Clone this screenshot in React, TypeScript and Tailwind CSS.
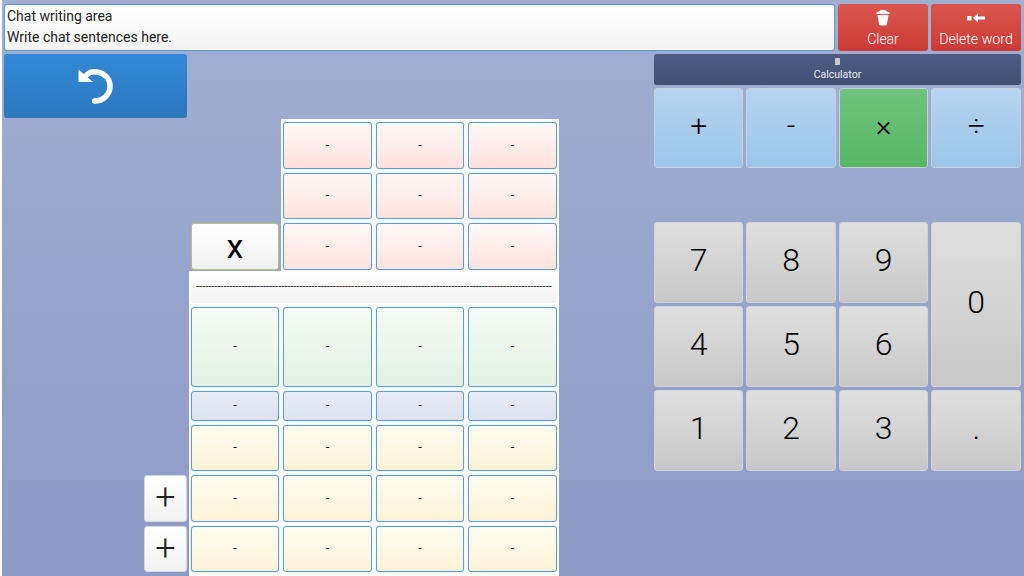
import type { ReactNode } from "react";

const font = { fontFamily: "Roboto, sans-serif" };

function Cell({ tone, className = "" }: { tone: string; className?: string }) {
  return (
    <div
      className={`flex items-center justify-center rounded-[3px] border border-[#5c9dd6] text-[13px] leading-none text-black shadow-[0_0_1px_#5c9dd6] ${tone} ${className}`}
    >
      <span className="-translate-y-[1px]">-</span>
    </div>
  );
}

const pink = "bg-gradient-to-b from-[#fff9f7] to-[#fde2dc] h-[46.5px]";
const green = "bg-gradient-to-b from-[#f6fcf6] to-[#e1f1e2] h-[80.5px]";
const blue = "bg-gradient-to-b from-[#e7ebf5] to-[#dce2ef] h-[29.5px]";
const yellow = "bg-gradient-to-b from-[#fffdf1] to-[#fdf3d7] h-[46.5px]";

function Repeat({ n, tone }: { n: number; tone: string }) {
  return (
    <>
      {Array.from({ length: n }).map((_, i) => (
        <Cell key={i} tone={tone} />
      ))}
    </>
  );
}

function CalcKey({ children, className }: { children: ReactNode; className: string }) {
  return (
    <div
      className={`flex items-center justify-center rounded-[3px] border border-[#c9cfdd] font-light text-black ${className}`}
    >
      <span className="-translate-y-[3px]">{children}</span>
    </div>
  );
}

const gray = "bg-gradient-to-b from-[#dfdfdf] to-[#c8c8c8] text-[32px] h-[81px] border-[#d0d3db]";
const op = "bg-gradient-to-b from-[#b6d4ef] to-[#9bc6e9] text-[30px] h-[80px]";

function PlusButton() {
  return (
    <div className="flex h-[46.5px] w-[43px] items-center justify-center rounded-[3px] border border-[#d4d8e4] bg-gradient-to-b from-white to-[#f1f1f1] text-[36px] font-light leading-none text-[#222]">
      <span className="-translate-y-[1px]">+</span>
    </div>
  );
}

export default function App() {
  return (
    <div
      style={font}
      className="flex h-[576px] w-[1024px] flex-col overflow-hidden border-l-2 border-white bg-gradient-to-b from-[#a3afd1] to-[#8c9ac6] pl-[2px] pr-[3px] pt-[4px]"
    >
      {/* Top: chat box and buttons */}
      <div className="flex h-[47px] gap-[3px]">
        <div className="flex-1 rounded-[3px] border border-[#5c9dd6] bg-gradient-to-b from-white to-[#f4f4f4] pl-[2px] pt-[0.5px] text-[14px] leading-[21px] text-[#222] shadow-[0_0_1px_#5c9dd6]">
          <div>Chat writing area</div>
          <div>Write chat sentences here.</div>
        </div>
        <div className="flex w-[90px] flex-col items-center rounded-[3px] bg-gradient-to-b from-[#d9574f] to-[#cd3a35] pt-[6px] text-[14px] font-light leading-none text-white">
          <svg width="14" height="16" viewBox="0 0 14 16" fill="white">
            <path d="M0.5 2.5 L3 1.5 L5 0 L9 0 L11 1.5 L13.5 2.5 L13.5 4 L0.5 4 Z" />
            <path d="M1.5 5 L12.5 5 L10.8 15 Q7 16 3.2 15 Z" />
          </svg>
          <span className="mt-[6px]">Clear</span>
        </div>
        <div className="flex w-[90px] flex-col items-center rounded-[3px] bg-gradient-to-b from-[#d9574f] to-[#cd3a35] pt-[9px] text-[14.2px] font-light leading-none text-white">
          <svg width="18" height="10" viewBox="0 0 18 10" fill="white">
            <rect x="0" y="3" width="4.5" height="4.5" />
            <path d="M6 5 L11 0.5 L11 3.5 L18 3.5 L18 6.5 L11 6.5 L11 9.5 Z" />
          </svg>
          <span className="mt-[9px]">Delete word</span>
        </div>
      </div>

      {/* Body */}
      <div className="mt-[3px] flex flex-1">
        {/* Left column */}
        <div className="flex w-[183px] flex-col">
          <div className="flex h-[64px] items-center justify-center rounded-[3px] bg-gradient-to-b from-[#3389d6] to-[#2a78bd]">
            <svg width="40" height="40" viewBox="0 0 40 40" fill="none">
              <path
                d="M11 8.5 C14 6 18 5.5 21 6 C29 7.5 34 13 34 20 C34 29 27 35 18.5 35"
                stroke="white"
                strokeWidth="5.5"
                strokeLinecap="round"
              />
              <path d="M2.5 3.5 L17 16 L2.5 16 Z" fill="white" />
            </svg>
          </div>
          <div className="mb-[4px] mt-auto flex flex-col items-end gap-[4px]">
            <PlusButton />
            <PlusButton />
          </div>
        </div>

        {/* Math panel */}
        <div className="ml-[2px] flex w-[370px] flex-col">
          <div className="ml-[92px] mt-[65px] grid grid-cols-3 gap-[4px] bg-white px-[2px] pb-[4px] pt-[3px]">
            <Repeat n={6} tone={pink} />
          </div>
          <div className="flex">
            <div className="w-[92px] px-[2px]">
              <div className="flex h-[46.5px] items-center justify-center rounded-[3px] border border-[#b3bd7c] bg-gradient-to-b from-white to-[#f1f1f1] text-[34px] leading-none text-black shadow-[0_0_1px_#b3bd7c]">
                <span>x</span>
              </div>
            </div>
            <div className="grid flex-1 grid-cols-3 gap-[4px] bg-white px-[2px] pb-[1px]">
              <Repeat n={3} tone={pink} />
            </div>
          </div>
          <div className="flex-1 bg-white pb-[2px] pl-[1.9px] pr-[2.1px]">
            <div className="flex h-[32px] items-center justify-center whitespace-nowrap rounded-[3px] bg-gradient-to-b from-white to-[#f3f3f3] text-[11px] leading-none text-[#222]">
              <span>{"-".repeat(117)}</span>
            </div>
            <div className="mt-[4px] grid grid-cols-4 gap-[4px]">
              <Repeat n={4} tone={green} />
              <Repeat n={4} tone={blue} />
              <Repeat n={12} tone={yellow} />
            </div>
          </div>
        </div>

        {/* Calculator */}
        <div className="ml-[94.9px] flex flex-1 flex-col">
          <div className="flex h-[31px] flex-col items-center rounded-[3px] bg-gradient-to-b from-[#4f5d85] to-[#414f72] pt-[4px] text-[10.5px] leading-none text-[#e8eaf0]">
            <svg width="5" height="7" viewBox="0 0 5 7" fill="#c6cad6">
              <rect width="5" height="7" rx="0.5" />
            </svg>
            <span className="mt-[5px]">Calculator</span>
          </div>
          <div className="mt-[3px] grid grid-cols-4 gap-[3px]">
            <CalcKey className={op}>+</CalcKey>
            <CalcKey className={op}>-</CalcKey>
            <CalcKey className="h-[80px] bg-gradient-to-b from-[#6fc37d] to-[#57b765] text-[30px]">×</CalcKey>
            <CalcKey className={op}>÷</CalcKey>
          </div>
          <div className="mt-[54px] grid grid-cols-4 gap-[3px]">
            <CalcKey className={gray}>7</CalcKey>
            <CalcKey className={gray}>8</CalcKey>
            <CalcKey className={gray}>9</CalcKey>
            <CalcKey className="row-span-2 border-[#d0d3db] bg-gradient-to-b from-[#dfdfdf] to-[#c8c8c8] text-[32px]">0</CalcKey>
            <CalcKey className={gray}>4</CalcKey>
            <CalcKey className={gray}>5</CalcKey>
            <CalcKey className={gray}>6</CalcKey>
            <CalcKey className={gray}>1</CalcKey>
            <CalcKey className={gray}>2</CalcKey>
            <CalcKey className={gray}>3</CalcKey>
            <CalcKey className={gray}>.</CalcKey>
          </div>
        </div>
      </div>
    </div>
  );
}
